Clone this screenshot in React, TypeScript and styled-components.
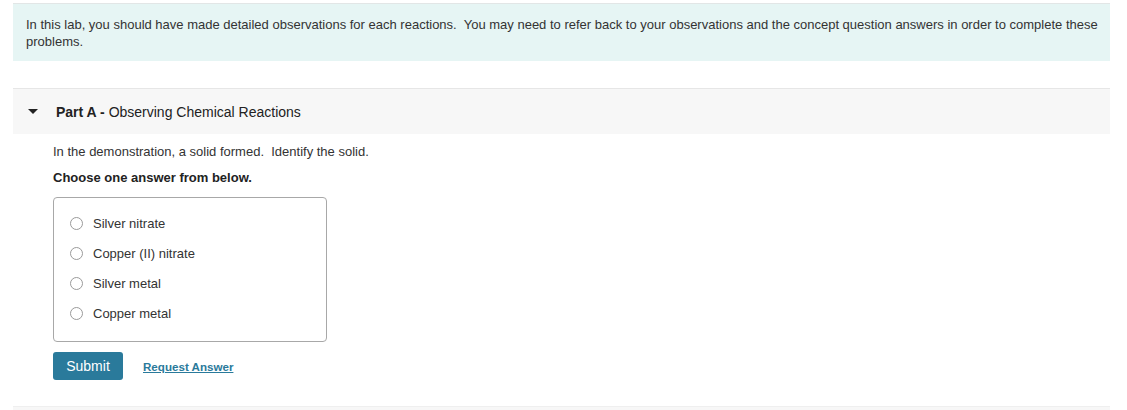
import styled, { createGlobalStyle } from "styled-components";

const GlobalStyle = createGlobalStyle`
	body {
		margin: 0;
		background: #fff;
		font-family: "Liberation Sans", Arial, Helvetica, sans-serif;
		color: #333;
	}
`;

const Page = styled.div`
	padding: 3px 17px 0 13px;
`;

const Intro = styled.div`
	background-color: #e6f5f4;
	border-top: 1px solid #e2e6e6;
	padding: 12px 2px 11px 13px;
	font-size: 13px;
	line-height: 17px;
	white-space: pre-wrap;
	color: #333;
`;

const Part = styled.section`
	margin-top: 27px;
`;

const PartHeader = styled.div`
	display: flex;
	align-items: center;
	height: 45px;
	background-color: #f7f7f7;
	border-top: 1px solid #e6e6e6;
	font-size: 14px;
	color: #222;
`;

const Caret = styled.span`
	width: 0;
	height: 0;
	margin: 0 18px 0 15px;
	border-left: 5px solid transparent;
	border-right: 5px solid transparent;
	border-top: 5px solid #222;
`;

const PartBody = styled.div`
	padding: 10px 0 0 40px;
	font-size: 13px;
`;

const Question = styled.p`
	margin: 0;
	line-height: 16px;
	white-space: pre-wrap;
`;

const Instruction = styled.p`
	margin: 10px 0 0;
	line-height: 16px;
	font-weight: bold;
	color: #222;
`;

const Choices = styled.div`
	margin-top: 11px;
	width: 272px;
	border: 1px solid #a8a8a8;
	border-radius: 4px;
	padding: 10px 0 13px;
	display: flex;
	flex-direction: column;
`;

const Choice = styled.label`
	display: flex;
	align-items: center;
	height: 30px;
	padding-left: 16px;
	font-size: 13px;
	color: #333;
`;

const Radio = styled.span`
	box-sizing: border-box;
	width: 13px;
	height: 13px;
	border: 1px solid #9a9a9a;
	border-radius: 50%;
	background: #fff;
	margin-right: 10px;
`;

const Actions = styled.div`
	display: flex;
	align-items: center;
	gap: 20px;
	margin-top: 10px;
`;

const SubmitButton = styled.button`
	width: 70px;
	height: 28px;
	border: none;
	border-radius: 3px;
	background-color: #2a7a9b;
	color: #fff;
	font-family: "Liberation Sans", Arial, sans-serif;
	font-size: 14px;
	padding: 0;
`;

const RequestLink = styled.a`
	color: #2a7a9b;
	font-size: 11.6px;
	font-weight: bold;
	text-decoration: underline;
`;

const NextPart = styled.div`
	margin-top: 26px;
	height: 20px;
	background-color: #f7f7f7;
	border-top: 1px solid #efefef;
`;

const choices = ["Silver nitrate", "Copper (II) nitrate", "Silver metal", "Copper metal"];

export default function App() {
	return (
		<Page>
			<GlobalStyle />
			<Intro>
				{"In this lab, you should have made detailed observations for each reactions.  You may need to refer back to your observations and the concept question answers in order to complete these problems."}
			</Intro>
			<Part>
				<PartHeader>
					<Caret />
					<b>Part A -</b>&nbsp;Observing Chemical Reactions
				</PartHeader>
				<PartBody>
					<Question>{"In the demonstration, a solid formed.  Identify the solid."}</Question>
					<Instruction>Choose one answer from below.</Instruction>
					<Choices>
						{choices.map((c) => (
							<Choice key={c}>
								<Radio />
								{c}
							</Choice>
						))}
					</Choices>
					<Actions>
						<SubmitButton>Submit</SubmitButton>
						<RequestLink>Request Answer</RequestLink>
					</Actions>
				</PartBody>
			</Part>
			<NextPart />
		</Page>
	);
}
